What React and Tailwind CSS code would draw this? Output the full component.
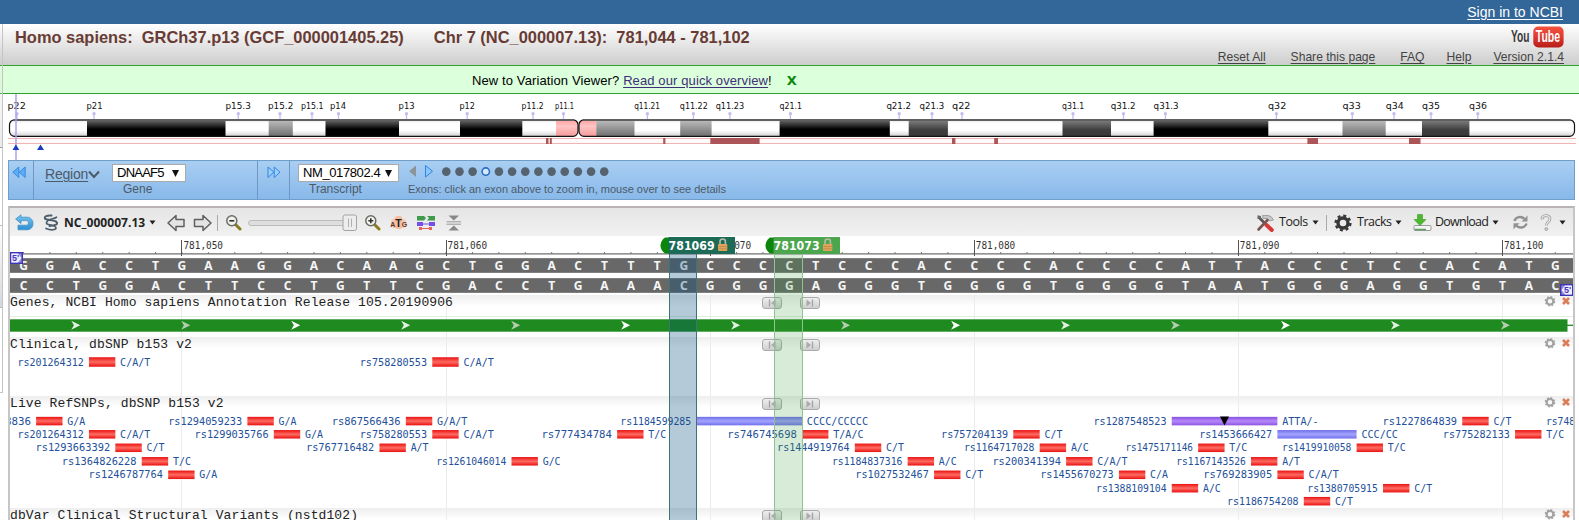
import React from 'react';

const PITCH = 26.41;
const LEFT = 10;
const baseX = (i) => LEFT - 0.3 + PITCH * i;
const centerX = (i) => 23.5 + PITCH * i;

const SEQ = 'GGACCTGAAGGACAAGCTGGACTTTGCCCCTCCCACCCCACCCCATTACCCTCCACATG';
const PAIR = { A: 'T', T: 'A', G: 'C', C: 'G' };
const TICKS = [6, 16, 26, 36, 46, 56];

const BANDS = [
  [87, 138.5, 'k'], [268.7, 24.1, 'g'], [325.5, 73.5, 'k'], [460, 62.3, 'k'],
  [596.3, 38.2, 'g'], [680.2, 31.4, 'g'], [779.6, 110.2, 'k'], [908.7, 39.2, 'd'],
  [1062.5, 48.5, 'd'], [1153.6, 114.7, 'k'], [1342.5, 43.2, 'g'], [1422, 47.4, 'd'],
];

const BAND_LABELS = [
  ['p22', 7.5, 18.3, 17], ['p21', 86.5, 16, 94], ['p15.3', 225.5, 25.3, 238.3], ['p15.2', 268, 25.3, 280],
  ['p15.1', 301, 22.5, 312], ['p14', 330, 16, 338.5], ['p13', 398.6, 16, 406.5], ['p12', 459.4, 15.5, 467.2],
  ['p11.2', 521.6, 22, 533], ['p11.1', 555, 19, 563.5], ['q11.21', 634.2, 25.8, 647.4], ['q11.22', 679.8, 28, 693.4],
  ['q11.23', 715.7, 28.5, 729.9], ['q21.1', 779.6, 22.3, 790.4], ['q21.2', 886.4, 24.7, 899.2],
  ['q21.3', 919.5, 24.7, 932], ['q22', 952, 18.5, 962], ['q31.1', 1062, 22.3, 1073], ['q31.2', 1110.7, 25, 1123.5],
  ['q31.3', 1153.6, 25, 1165.4], ['q32', 1268, 18.3, 1276.4], ['q33', 1342.5, 18.3, 1352.3],
  ['q34', 1385.7, 18, 1394], ['q35', 1422, 18, 1431], ['q36', 1469, 18, 1477.8],
];

const MARKS = [[546, 2.5], [549.8, 2], [663.2, 2.2], [710.3, 49.3], [952, 3.4], [994.2, 3.8], [1307.4, 10.6], [1409, 11.5]];

const ROW_Y = [421.1, 434.3, 447.8, 461.3, 474.8, 488.2, 501.2];
const SNPS = [
  [0, '8836', 1, 1, 'G/A', 26, 'r'], [0, 'rs1294059233', 9, 1, 'G/A', 74, 'r'], [0, 'rs867566436', 15, 1, 'G/A/T', 69, 'r'],
  [0, 'rs1184599285', 26, 4, 'CCCC/CCCCC', 70.8, 'b'], [0, 'rs1287548523', 44, 4, 'ATTA/-', 73, 'p'],
  [0, 'rs1227864839', 55, 1, 'C/T', 74.5, 'r'],
  [1, 'rs201264312', 3, 1, 'C/A/T', 66.3, 'r'], [1, 'rs1299035766', 10, 1, 'G/A', 74, 'r'], [1, 'rs758280553', 16, 1, 'C/A/T', 67.3, 'r'],
  [1, 'rs777434784', 23, 1, 'T/C', 70.5, 'r'], [1, 'rs746745698', 30, 1, 'T/A/C', 69.5, 'r'], [1, 'rs757204139', 38, 1, 'C/T', 67, 'r'],
  [1, 'rs1453666427', 48, 3, 'CCC/CC', 73, 'b'], [1, 'rs775282133', 57, 1, 'T/C', 67, 'r'],
  [2, 'rs1293663392', 4, 1, 'C/T', 74.7, 'r'], [2, 'rs767716482', 14, 1, 'A/T', 68.3, 'r'], [2, 'rs1444919764', 32, 1, 'C/T', 72.5, 'r'],
  [2, 'rs1164717028', 39, 1, 'A/C', 70.5, 'r'], [2, 'rs1475171146', 45, 1, 'T/C', 67.5, 'r'], [2, 'rs1419910058', 51, 1, 'T/C', 69.5, 'r'],
  [3, 'rs1364826228', 5, 1, 'T/C', 74.7, 'r'], [3, 'rs1261046014', 19, 1, 'G/C', 70, 'r'], [3, 'rs1184837316', 34, 1, 'A/C', 70.5, 'r'],
  [3, 'rs200341394', 40, 1, 'C/A/T', 68.5, 'r'], [3, 'rs1167143526', 47, 1, 'A/T', 69.5, 'r'],
  [4, 'rs1246787764', 6, 1, 'G/A', 74.4, 'r'], [4, 'rs1027532467', 35, 1, 'C/T', 73.5, 'r'], [4, 'rs1455670273', 42, 1, 'C/A', 73.5, 'r'],
  [4, 'rs769283905', 48, 1, 'C/A/T', 69, 'r'],
  [5, 'rs1388109104', 44, 1, 'A/C', 70.5, 'r'], [5, 'rs1380705915', 52, 1, 'C/T', 70.5, 'r'],
  [6, 'rs1186754208', 49, 1, 'C/T', 71.5, 'r'],
];

function Defs() {
  return (
    <defs>
      <linearGradient id="r" x2="0" y2="1"><stop offset="0" stopColor="#e81010" /><stop offset=".5" stopColor="#ff6b62" /><stop offset="1" stopColor="#e81010" /></linearGradient>
      <linearGradient id="b" x2="0" y2="1"><stop offset="0" stopColor="#6e6ee8" /><stop offset=".5" stopColor="#a4a4ff" /><stop offset="1" stopColor="#7070ea" /></linearGradient>
      <linearGradient id="p" x2="0" y2="1"><stop offset="0" stopColor="#8450dc" /><stop offset=".5" stopColor="#b888fb" /><stop offset="1" stopColor="#8a56e0" /></linearGradient>
      <linearGradient id="k" x2="0" y2="1"><stop offset="0" stopColor="#6a6a6a" /><stop offset=".55" stopColor="#000" /><stop offset="1" stopColor="#000" /></linearGradient>
      <linearGradient id="g" x2="0" y2="1"><stop offset="0" stopColor="#bdbdbd" /><stop offset="1" stopColor="#6e6e6e" /></linearGradient>
      <linearGradient id="d" x2="0" y2="1"><stop offset="0" stopColor="#808080" /><stop offset=".6" stopColor="#3e3e3e" /><stop offset="1" stopColor="#383838" /></linearGradient>
      <linearGradient id="w" x2="0" y2="1"><stop offset="0" stopColor="#e8e8e8" /><stop offset=".25" stopColor="#fff" /><stop offset=".65" stopColor="#fff" /><stop offset="1" stopColor="#cfcfcf" /></linearGradient>
      <linearGradient id="pk" x2="0" y2="1"><stop offset="0" stopColor="#ffa0a0" /><stop offset=".4" stopColor="#ffc4c4" /><stop offset="1" stopColor="#f59a9a" /></linearGradient>
      <linearGradient id="bl" x2="0" y2="1"><stop offset="0" stopColor="#7cc4ee" /><stop offset="1" stopColor="#2f8fd0" /></linearGradient>
    </defs>
  );
}

function Ideogram() {
  return (
    <svg className="block shrink-0" width="1579" height="66" viewBox="0 94 1579 66">
      <Defs />
      <rect x="9.5" y="119.5" width="568.5" height="17" rx="5" fill="url(#w)" />
      <rect x="579" y="119.5" width="995.5" height="17" rx="5" fill="url(#w)" />
      <path d="M556 119.5H574Q578 119.5 578 128T574 136.5H556Z" fill="url(#pk)" />
      <path d="M596.5 119.5H583Q579 119.5 579 128T583 136.5H596.5Z" fill="url(#pk)" />
      {BANDS.map(([x, w, c]) => <rect key={x} x={x} y="120" width={w} height="16.5" fill={`url(#${c})`} />)}
      <rect x="9.5" y="119.8" width="568.5" height="16.5" rx="5" fill="none" stroke="#111" strokeWidth="1.2" />
      <rect x="579" y="119.8" width="995.5" height="16.5" rx="5" fill="none" stroke="#111" strokeWidth="1.2" />
      <path d="M14 120H573M584 120H1570" stroke="#606060" strokeWidth="2" />
      {BAND_LABELS.map(([t, x, w, px]) => (
        <g key={t}>
          <path d={`M${px} 113V119`} stroke="#c4bdf0" strokeWidth="1.3" />
          <circle cx={px} cy="113.7" r="1.7" fill="#c4bdf0" />
          <text x={x} y="109.2" textLength={w} lengthAdjust="spacingAndGlyphs" fontSize="9.3" fontFamily="DejaVu Sans" fill="#111">{t}</text>
        </g>
      ))}
      <rect x="8" y="138.5" width="1568" height="5" fill="#fffafa" />
      <path d="M8 138.5H1576M8 143.5H1576" stroke="#efb4b4" />
      {MARKS.map(([x, w]) => <rect key={x} x={x} y="138" width={w} height="6" fill="#ab5558" />)}
      <rect x="15" y="94" width="2" height="66" fill="#a9a2ee" opacity=".75" />
      <path d="M12.5 150L15.9 144.5L19.3 150ZM37 150L40.5 144.5L44 150Z" fill="#1a3cc0" />
    </svg>
  );
}

function GridLines({ y, h }) {
  return TICKS.map((i) => <rect key={i} x={Math.round(centerX(i) - 0.5)} y={y} width="1" height={h} fill="#ececec" />);
}

function Snp({ y, h = 8.5, item }) {
  const [, label, i, n, allele, w, kind] = item;
  const x = baseX(i);
  return (
    <g fontFamily="DejaVu Sans Mono" fontSize="9.8" fill="#23509a">
      <text x={x - 5.2 - w} y={y + 3.5} textLength={w} lengthAdjust="spacingAndGlyphs">{label}</text>
      <rect x={x} y={y - h / 2} width={n * PITCH} height={h} fill={`url(#${kind})`} />
      <text x={x + n * PITCH + 4.8} y={y + 3.5} textLength={allele.length * 6.2 - 0.7} lengthAdjust="spacingAndGlyphs">{allele}</text>
    </g>
  );
}

function Canvas({ y, h, children }) {
  return <svg className="block shrink-0" width="1563" height={h} viewBox={`10 ${y} 1563 ${h}`}>{children}</svg>;
}

function StepButton({ back }) {
  return (
    <span className="flex h-3 w-5 items-center justify-center rounded-[3px] border border-[#aaa] bg-linear-to-b from-[#eee] to-[#cfcfcf]">
      <svg width="10" height="8" viewBox="0 0 10 8" className={back ? '' : '-scale-x-100'}>
        <path d="M2.5 0.5V7.5" stroke="#a2a2a2" strokeWidth="1.3" /><path d="M8.5 0.5V7.5L4 4Z" fill="#aaa" />
      </svg>
    </span>
  );
}

function Track({ title, y, h, children }) {
  return (
    <div className="relative shrink-0">
      <Canvas y={y} h={h}>
        <linearGradient id={`h${y}`} x2="0" y2="1"><stop offset="0" stopColor="#eeeeee" /><stop offset="1" stopColor="#fff" /></linearGradient>
        <rect x="10" y={y} width="1563" height="11" fill={`url(#h${y})`} />
        <GridLines y={y} h={h} />
        {children}
      </Canvas>
      <div className="absolute inset-x-0 top-0 flex h-4 items-start">
        <span className="w-[752px] whitespace-pre font-['Liberation_Mono'] text-[13px] leading-[15px] tracking-[0.11px] text-[#222]">{title}</span>
        <span className="flex w-[781px] gap-[18px] pt-[2px]"><StepButton back /><StepButton /></span>
        <svg width="30" height="14" viewBox="0 0 30 14">
          <circle cx="7" cy="6.3" r="3.3" fill="none" stroke="#a0a0a0" strokeWidth="2" />
          <circle cx="7" cy="6.3" r="4.6" fill="none" stroke="#a0a0a0" strokeWidth="1.4" strokeDasharray="1.9 1.7" />
          <path d="M20 3L26 9M26 3L20 9" stroke="#dd7d58" strokeWidth="2.6" />
        </svg>
      </div>
    </div>
  );
}

function Caret({ className }) {
  return <svg className={className} width="7" height="5" viewBox="0 0 7 5"><path d="M0.5 .5H6.5L3.5 4.5Z" fill="#222" /></svg>;
}

function Magnifier({ plus, className }) {
  return (
    <svg className={className} width="17" height="17" viewBox="0 0 17 17">
      <path d="M10 10L15 15" stroke="#8a7a20" strokeWidth="3" strokeLinecap="round" />
      <circle cx="6.8" cy="6.8" r="5" fill="#f2f2ee" stroke="#6c6c64" strokeWidth="1.5" />
      <path d={plus ? 'M4.3 6.8H9.3M6.8 4.3V9.3' : 'M4.3 6.8H9.3'} stroke="#333" strokeWidth="1.6" />
    </svg>
  );
}

function Toolbar() {
  return (
    <div className="flex h-7 shrink-0 items-center bg-linear-to-b from-[#e5e5e5] to-[#f1f1f1] pt-px font-['Open_Sans'] text-[#222]">
      <svg className="ml-[5px]" width="19" height="18" viewBox="0 0 19 18">
        <path d="M6 0.8L0.6 5L6 9.5V6.6H11.5C14 6.6 14 11.2 11.5 11.2H3V15.8H12C20 15.8 20 3.2 12 3.2H6Z" fill="url(#bl)" stroke="#3b93cc" strokeWidth=".8" />
      </svg>
      <svg className="ml-[9px]" width="16" height="18" viewBox="0 0 16 18" fill="none" stroke="#4d5f6c" strokeLinecap="round">
        <path d="M8.5 1.5C4 1 1 2.5 2 4.5S11 5.5 13.5 8S10 12 6.5 12" strokeWidth="2" />
        <path d="M13.5 3.2C11 5 7 4.5 5 6.5S2.5 10 5.5 10.5S13 12 13 14S8 16.5 3 14.5" strokeWidth="1.7" />
      </svg>
      <span className="ml-[5px] w-[85px] whitespace-nowrap text-[12px] font-bold tracking-[0.05px]">NC_000007.13</span>
      <Caret />
      <svg className="ml-[11px]" width="46" height="18" viewBox="0 0 46 18" fill="#e4e4e4" stroke="#606060" strokeWidth="1.5" strokeLinejoin="round">
        <path d="M1 9L9 1.5V5.5H17V12.5H9V16.5ZM44 9L36 1.5V5.5H27.5V12.5H36V16.5Z" />
      </svg>
      <span className="ml-[4px] h-4 w-px bg-[#aaa]" />
      <Magnifier className="ml-[7px]" />
      <svg className="ml-[6px]" width="112" height="18" viewBox="0 0 112 18">
        <rect x="0.5" y="6.5" width="100" height="5" rx="2.5" fill="#dedede" stroke="#bcbcbc" />
        <rect x="95" y="1" width="13.5" height="15.5" rx="2" fill="#ededed" stroke="#a3a3a3" />
        <path d="M100.5 4.5V13M103.5 4.5V13" stroke="#b0b0b0" />
      </svg>
      <Magnifier plus className="ml-[4px]" />
      <svg className="ml-[9px]" width="18" height="18" viewBox="0 0 18 18">
        <rect x="4.5" y="2" width="8" height="13" rx="3" fill="#f6bda0" /><rect x="1" y="5" width="15" height="9" rx="3" fill="#f6bda0" opacity=".7" />
        <text x="0.2" y="13" fontSize="7" fontWeight="bold" fontFamily="Liberation Sans" fill="#5a3a2a">A</text>
        <text x="5.3" y="13" fontSize="10.5" fontWeight="bold" fontFamily="Liberation Sans" fill="#222">T</text>
        <text x="11.8" y="13" fontSize="7" fontWeight="bold" fontFamily="Liberation Sans" fill="#5a3a2a">G</text>
      </svg>
      <svg className="ml-[9px]" width="18" height="16" viewBox="0 0 18 16">
        <path d="M0 1H7L9 3L7 5.5H0ZM10 1H18V5.5H10L12 3Z" fill="#3f9a4c" />
        <path d="M0 7H6V11H0ZM12 7H18V11H12ZM6 8.5H12V9.5H6Z" fill="#7350e8" />
        <path d="M2 12H5V15H2ZM12 12H15V15H12ZM5 13H12V14H5Z" fill="#e8635c" />
      </svg>
      <svg className="ml-[11px]" width="16" height="18" viewBox="0 0 16 18">
        <path d="M2.5 1.5H13L7.8 6.5ZM2.5 16.5H13L7.8 11.5Z" fill="#888" /><path d="M.5 7.8H15M.5 10.2H15" stroke="#999" />
      </svg>
      <svg className="ml-auto" width="19" height="18" viewBox="0 0 19 18">
        <path d="M3 3.5L8 8.5" stroke="#555" strokeWidth="2.6" /><path d="M10.5 11L15.8 16" stroke="#d83838" strokeWidth="4" strokeLinecap="round" />
        <path d="M2.5 15.5L12 5.5" stroke="#7a5550" strokeWidth="2.6" strokeLinecap="round" /><path d="M6.5 1.5H12Q15.5 1.5 17.5 6L13.5 6.8L11.5 4.5H7Z" fill="#c8c8c8" stroke="#888" strokeWidth=".7" />
        <path d="M1.5 1.2L5 2L4.5 5L1.5 5Z" fill="#666" />
      </svg>
      <span className="ml-[4px] w-[33px] text-[12.5px] tracking-[-0.45px]">Tools</span>
      <Caret />
      <span className="ml-[7px] h-4 w-px bg-[#aaa]" />
      <svg className="ml-[7px]" width="18" height="18" viewBox="0 0 18 18">
        <circle cx="9" cy="9" r="5" fill="none" stroke="#383838" strokeWidth="3.4" />
        <circle cx="9" cy="9" r="7.4" fill="none" stroke="#383838" strokeWidth="2.4" strokeDasharray="3 2.81" />
      </svg>
      <span className="ml-[5px] w-[38px] text-[12.5px] tracking-[-0.5px]">Tracks</span>
      <Caret />
      <svg className="ml-[11px]" width="19" height="18" viewBox="0 0 19 18">
        <rect x="1" y="11.5" width="17" height="5" rx="1" fill="#f4f4f4" stroke="#999" /><path d="M1.5 15.5H13" stroke="#5ca060" strokeWidth="1.5" />
        <path d="M4.5 0.5H9.5V5.5H13L7 11.5L1 5.5H4.5Z" fill="#4cb82f" stroke="#3c9a28" strokeWidth=".6" />
      </svg>
      <span className="ml-[3px] w-[57px] text-[12.5px] tracking-[-0.75px]">Download</span>
      <Caret />
      <svg className="ml-[13px]" width="17" height="17" viewBox="0 0 17 17" fill="none" stroke="#909090" strokeWidth="2.4">
        <path d="M2.5 7C3.5 3 9 1.5 12.5 4.8M14.5 9.5C13.5 13.5 8 15 4.5 11.8" />
        <path d="M15.5 1.5V7.5H9.5ZM1.5 15.2V9.2H7.5Z" fill="#929292" stroke="none" />
      </svg>
      <svg className="ml-[10px]" width="14" height="18" viewBox="0 0 14 18">
        <path d="M3 5.5C3 0.5 11 0.5 11 5C11 8 7.3 8 7.3 11.5" fill="none" stroke="#999" strokeWidth="2.8" /><path d="M3 5.5C3 0.5 11 0.5 11 5C11 8 7.3 8 7.3 11.5" fill="none" stroke="#eee" strokeWidth="1.2" /><circle cx="7.3" cy="15" r="1.5" fill="#c8c8c8" stroke="#999" strokeWidth=".7" />
      </svg>
      <Caret className="mr-[7px] ml-[6px]" />
    </div>
  );
}

function SequenceRow({ letters, top }) {
  return (
    <>
      <rect x="10" y={top} width="1563" height="15" fill="#686868" />
      <path d={`M10 ${top + 0.5}H1573M10 ${top + 14.5}H1573`} stroke="#808080" />
      {letters.map((c, i) => (
        <text key={i} x={centerX(i)} y={top + 12} textAnchor="middle" fontFamily="Noto Sans" fontWeight="bold" fontSize="12" fill="#f6f6f6">{c}</text>
      ))}
    </>
  );
}

function Ruler() {
  const seq = SEQ.split('');
  return (
    <Canvas y={236} h={59}>
      <rect x="10" y="236" width="1563" height="59" fill="#fff" />
      <path d="M10 253.8H1573" stroke="#707070" strokeWidth="1.2" />
      {seq.map((c, i) => <path key={i} d={`M${centerX(i)} 252V254`} stroke="#777" />)}
      {TICKS.map((i) => (
        <g key={i}>
          <rect x={Math.round(centerX(i) - 0.5)} y="240" width="1" height="16" fill="#555" />
          <text x={centerX(i) + 1.5} y="248.5" textLength="39.5" lengthAdjust="spacingAndGlyphs" fontFamily="DejaVu Sans Mono" fontSize="9.8" fill="#333">{`781,${(44 + i).toString().padStart(3, '0')}`}</text>
        </g>
      ))}
      <SequenceRow letters={seq} top={258} />
      <SequenceRow letters={seq.map((c) => PAIR[c])} top={278} />
    </Canvas>
  );
}

function FiveTag({ flip }) {
  return (
    <svg width="13" height="12" viewBox="0 0 13 12">
      <rect x=".7" y=".7" width="11.6" height="10.6" fill="#8f89e0" stroke="#3d34b8" strokeWidth="1.4" />
      <path d={flip ? 'M12 1.5V10.5H5L1.5 6L5 1.5Z' : 'M1.3 1.5V10.5H8L11.5 6L8 1.5Z'} fill="#f0efff" />
      <text x={flip ? 4 : 2} y="9.3" fontSize="9" fontWeight="bold" fontFamily="Liberation Sans" fill="#4238c0">5'</text>
    </svg>
  );
}

function MarkerLabel({ text, fill, w }) {
  return (
    <svg width={w} height="17" viewBox={`0 0 ${w} 17`}>
      <path d="M9 0.5H5Q0.5 4 0.5 8.5T5 16.5H9Z" fill="#0a860a" />
      <rect x="8.5" y="0" width={w - 8.5} height="17" fill={fill} />
      <text x="8.6" y="13.4" textLength="46" lengthAdjust="spacingAndGlyphs" fontFamily="DejaVu Sans" fontWeight="bold" fontSize="11.5" fill="#fff">{text}</text>
      <path d="M60 8V4.5Q60 2 62.7 2T65.4 4.5V8" fill="none" stroke="#b9b9a8" strokeWidth="1.6" />
      <rect x="58" y="7" width="9.3" height="7" rx="1" fill="#e0a35c" /><path d="M58.5 9.5H67M58.5 11.8H67" stroke="#b98742" strokeWidth=".7" />
    </svg>
  );
}

function Viewer() {
  const greens = ['#e4f0e0', '#b5cdb0', '#ffffff'];
  return (
    <div className="relative ml-2 flex h-[314px] w-[1567px] shrink-0 flex-col overflow-hidden border-x-2 border-t-2 border-x-[#c6c6c6] border-t-[#b9b3b3] bg-white">
      <Toolbar />
      <Ruler />
      <Track title="Genes, NCBI Homo sapiens Annotation Release 105.20190906" y={295} h={42}>
        <path d="M10 316.5H1573" stroke="#dff0df" />
        <rect x="10" y="319.3" width="1557.5" height="12.4" fill="#1f8a1f" />
        <path d="M1567 325.3H1573" stroke="#1f8a1f" strokeWidth="1.3" />
        {Array.from({ length: 14 }, (_, i) => (
          <path key={i} d={`M${71.3 + 109.97 * i} 320.8l9 4.5l-9 4.5l2.6 -4.5z`} fill={greens[i % 3]} />
        ))}
      </Track>
      <Track title="Clinical, dbSNP b153 v2" y={337} h={59}>
        <Snp y={362} h={9.5} item={SNPS[6]} />
        <Snp y={362} h={9.5} item={SNPS[8]} />
      </Track>
      <Track title="Live RefSNPs, dbSNP b153 v2" y={396} h={112}>
        {SNPS.map((s) => <Snp key={s[1]} y={ROW_Y[s[0]]} item={s} />)}
        <text x="1546" y="424.6" fontFamily="DejaVu Sans Mono" fontSize="9.8" fill="#23509a" textLength="29" lengthAdjust="spacingAndGlyphs">rs748</text>
        <path d="M1220 416.5H1229L1224.5 425.5Z" fill="#000" />
      </Track>
      <Track title="dbVar Clinical Structural Variants (nstd102)" y={508} h={12} />
      <div className="absolute top-[46px] bottom-0 left-[659px] w-[28px] border-x border-[#3d7478] bg-[#004878]/29" />
      <div className="absolute top-[46px] bottom-0 left-[764px] w-[29px] border-x border-[#8fc491] bg-[#3a9a3a]/20" />
      <div className="absolute top-[29px] left-[650px]"><MarkerLabel text="781069" fill="#1c6b56" w={75} /></div>
      <div className="absolute top-[29px] left-[755px]"><MarkerLabel text="781073" fill="#4ca64e" w={75} /></div>
      <div className="absolute top-[44px] left-0"><FiveTag /></div>
      <div className="absolute top-[76px] right-0"><FiveTag flip /></div>
    </div>
  );
}

function Select({ children, className }) {
  return (
    <span className={`flex h-[18px] items-center justify-between border border-[#a9a9a9] bg-white pr-[6px] pl-[4px] text-[13px] text-black ${className}`}>
      <span>{children}</span>
      <svg className="shrink-0" width="7" height="7" viewBox="0 0 8 8"><path d="M0 0H8L4 8Z" fill="#111" /></svg>
    </span>
  );
}

function NavBar() {
  return (
    <div className="ml-2 flex h-10 w-[1567px] shrink-0 border border-[#6f9fc8] bg-linear-to-b from-[#a9cef2] to-[#88b9ea] text-[#4c5a68]">
      <div className="w-[25px] border-r border-[#6f97c0] pt-[5px] pl-[3px]">
        <svg width="14" height="13" viewBox="0 0 14 13" fill="#5aaef6" stroke="#2f86e0" strokeWidth=".9"><path d="M6.8 1V11.5L.8 6.2ZM13.2 1V11.5L7.2 6.2Z" /></svg>
      </div>
      <div className="flex w-[224px] border-r border-[#6f97c0] pl-[11px]">
        <span className="w-[43px] pt-[4px] text-[14px] leading-[18px] tracking-[-0.2px] underline underline-offset-2">Region</span>
        <svg className="mt-[9px]" width="12" height="9" viewBox="0 0 12 9"><path d="M1 1.5L6 7L11 1.5" fill="none" stroke="#4c5a68" strokeWidth="2" /></svg>
        <div className="ml-[12px] flex flex-col pt-[3px]">
          <Select className="w-[74px] tracking-[-0.75px]">DNAAF5</Select>
          <span className="pl-[11px] text-[12px] leading-[15px]">Gene</span>
        </div>
      </div>
      <div className="w-[32px] border-r border-[#6f97c0] pt-[5px] pl-[9px]">
        <svg width="14" height="13" viewBox="0 0 14 13" fill="#9fd0fb" stroke="#2f86e0" strokeWidth="1"><path d="M1 1V11.5L6.8 6.2ZM7.2 1V11.5L13 6.2Z" /></svg>
      </div>
      <div className="flex flex-col pt-[3px] pl-[8px]">
        <Select className="w-[101px] tracking-[-0.4px]">NM_017802.4</Select>
        <span className="pl-[11px] text-[12px] leading-[15px]">Transcript</span>
      </div>
      <div className="flex flex-col pt-[3px] pl-[9px]">
        <svg width="210" height="15" viewBox="408 164 210 15">
          <path d="M416 165.5V177L409 171.3Z" fill="#8d9499" /><path d="M425.5 165.5V177L432.5 171.3Z" fill="#8cc6fa" stroke="#2f86e0" />
          {Array.from({ length: 13 }, (_, i) => i === 3
            ? <circle key={i} cx={446.3 + 13.16 * i} cy="171.6" r="3.7" fill="#d5eaff" stroke="#2a6fc0" strokeWidth="1.6" />
            : <circle key={i} cx={446.3 + 13.16 * i} cy="171.6" r="4.3" fill="#56636f" />)}
        </svg>
        <span className="pt-[3px] text-[11px] leading-[14px] tracking-[-0.01px]">Exons: click an exon above to zoom in, mouse over to see details</span>
      </div>
    </div>
  );
}

export default function App() {
  return (
    <div className="relative flex h-[520px] w-[1579px] flex-col overflow-hidden bg-white font-['Liberation_Sans',sans-serif]">
      <div className="flex h-6 shrink-0 items-center justify-end bg-[#336699] pr-[16px] text-[14px] text-white underline underline-offset-2">Sign in to NCBI</div>
      <header className="flex h-[42px] shrink-0 justify-between border-b border-[#2ea02e] bg-linear-to-b from-white to-[#cdcdcd] pr-[15px] pl-[15px]">
        <h1 className="whitespace-pre pt-[3px] text-[16.43px] leading-5 font-bold text-[#683c34]">
          <span>Homo sapiens:  GRCh37.p13 (GCF_000001405.25)</span>
          <span className="ml-[30px]">Chr 7 (NC_000007.13):  781,044 - 781,102</span>
        </h1>
        <div className="flex flex-col items-end">
          <div className="mt-[2px] flex h-[22px] items-center gap-[2px] leading-none font-bold">
            <svg width="20" height="22" viewBox="0 0 20 22"><text transform="scale(.6 1)" x="0" y="16.5" fontSize="17" fontFamily="Liberation Sans" fill="#3a3a3a">You</text></svg>
            <svg width="31" height="22" viewBox="0 0 31 22">
              <linearGradient id="yt" x2="0" y2="1"><stop offset="0" stopColor="#f4533f" /><stop offset=".5" stopColor="#dc3a30" /><stop offset="1" stopColor="#b81c18" /></linearGradient>
              <rect x=".3" y=".5" width="30.3" height="21" rx="5" fill="url(#yt)" />
              <text transform="scale(.62 1)" x="4.5" y="16.5" fontSize="17" fontFamily="Liberation Sans" fill="#fff">Tube</text>
            </svg>
          </div>
          <nav className="flex pt-px text-[12.1px] leading-[16px] text-[#444] underline underline-offset-2">
            <span>Reset All</span><span className="ml-[25px]">Share this page</span><span className="ml-[25px]">FAQ</span><span className="ml-[22px]">Help</span><span className="ml-[22px]">Version 2.1.4</span>
          </nav>
        </div>
      </header>
      <div className="flex h-7 shrink-0 items-center border-b border-[#2ea02e] bg-[#dcffdc] pt-[2px] pl-[472px] text-[13px] tracking-[0.11px] whitespace-pre text-black">
        <span>New to Variation Viewer? </span><span className="text-[#3f2f78] underline underline-offset-2">Read our quick overview</span><span>!</span>
        <span className="ml-[15px] font-['DejaVu_Sans'] text-[13px] font-bold text-[#0a860a]">X</span>
      </div>
      <Ideogram />
      <NavBar />
      <div className="h-[6px] shrink-0" />
      <Viewer />
      <div className="absolute top-6 left-0 flex h-[369px] w-[3px] flex-col border-r border-[#c4c4c4]">
        <span className="h-[32px]" /><span className="h-[92px] border-b border-[#999] bg-linear-to-b from-transparent to-[#ddd]/60" />
        <span className="mt-[77px] h-[83px] border-y border-[#bbb] bg-linear-to-b from-white to-[#d6d6de]" />
        <span className="flex-1 border-b border-[#c4c4c4]" />
      </div>
    </div>
  );
}
